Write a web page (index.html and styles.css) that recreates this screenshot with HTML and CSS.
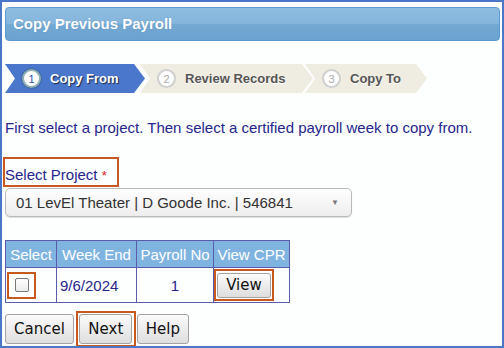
FILE: index.html
```html
<!DOCTYPE html>
<html lang="en">
<head>
  <meta charset="UTF-8" />
  <title>Copy Previous Payroll</title>
  <link rel="stylesheet" href="styles.css">
</head>
<body>
  <div class="frame">
    <div class="panel-head">Copy Previous Payroll</div>

    <div class="steps">
      <div class="step step-first active"><span class="num">1</span>Copy From</div>
      <div class="step step-mid"><span class="num">2</span>Review Records</div>
      <div class="step step-last"><span class="num">3</span>Copy To</div>
    </div>

    <p class="intro">First select a project. Then select a certified payroll week to copy from.</p>

    <div class="hl label-box">Select Project <span class="req">*</span></div>

    <div class="select">
      <span>01 LevEl Theater | D Goode Inc. | 546841</span>
      <span class="caret">&#9660;</span>
    </div>

    <table class="weeks">
      <tr>
        <th class="c-sel">Select</th>
        <th class="c-week">Week End</th>
        <th class="c-no">Payroll No</th>
        <th class="c-view">View CPR</th>
      </tr>
      <tr>
        <td class="c-sel"><span class="hl check-box"><span class="check"></span></span></td>
        <td class="c-week date">9/6/2024</td>
        <td class="c-no num-cell">1</td>
        <td class="c-view"><span class="hl btn-box"><button class="btn btn-view">View</button></span></td>
      </tr>
    </table>

    <div class="actions">
      <button class="btn">Cancel</button>
      <span class="hl next-box"><button class="btn">Next</button></span>
      <button class="btn btn-help">Help</button>
    </div>
  </div>
</body>
</html>
```

FILE: styles.css
```css
body {
  margin: 0;
  font-family: "Liberation Sans", Arial, sans-serif;
  background: #fff;
}

.frame {
  width: 504px;
  height: 348px;
  box-sizing: border-box;
  border: 2px solid #4a78c9;
  padding: 5px 2px 0 3px;
  background: #fdfefe;
  overflow: hidden;
}

.panel-head {
  height: 32px;
  line-height: 32px;
  border: 1px solid #5d98d2;
  border-radius: 4px;
  padding-left: 7px;
  background: linear-gradient(#8fbde1, #84b5dc 48%, #73a8d2 52%, #6ba2cf);
  color: #fff;
  font-size: 15px;
  font-weight: bold;
  text-shadow: 0 0 1px rgba(40, 80, 130, 0.4);
}

/* wizard steps */
.steps {
  display: flex;
  height: 29px;
  margin: 23px 0 0 0;
}

.step {
  display: flex;
  align-items: center;
  gap: 9px;
  box-sizing: border-box;
  padding-left: 17px;
  background: #efece1;
  color: #555;
  font-size: 13px;
  font-weight: bold;
  text-shadow: 0 1px 0 #fff;
  clip-path: polygon(0 0, calc(100% - 11px) 0, 100% 50%, calc(100% - 11px) 100%, 0 100%, 10px 50%);
}

.step-first { width: 140px; }
.step-mid { width: 173px; margin-left: -5px; }
.step-last { width: 122px; margin-left: -8px; }

.step.active {
  background: #4a77cc;
  color: #fff;
  text-shadow: 1px 1px 1px #1d2b4a;
}

.num {
  display: inline-flex;
  align-items: center;
  justify-content: center;
  width: 15px;
  height: 15px;
  border: 2px solid #cfcfcf;
  border-radius: 50%;
  background: #fff;
  color: #aaa;
  font-size: 11px;
  font-weight: normal;
  text-shadow: none;
}

.active .num {
  border-color: #8fb0b4;
  color: #2a55b0;
  box-shadow: 0 0 2px #2c4560;
}

.intro {
  margin: 26px 0 21px 0;
  font-size: 15px;
  line-height: 17px;
  color: #26268c;
}

/* orange highlight boxes */
.hl {
  border: 2px solid #c8591e;
  box-sizing: border-box;
}

.label-box {
  display: inline-block;
  margin-left: -2px;
  padding: 7px 10px 2px 0;
  height: 30px;
  font-size: 15px;
  line-height: 17px;
  color: #26268c;
}

.req { color: #e02020; font-size: 13px; }

.select {
  display: flex;
  align-items: center;
  justify-content: space-between;
  width: 347px;
  height: 29px;
  box-sizing: border-box;
  margin: 1px 0 0 0;
  padding: 0 12px 0 10px;
  border: 1px solid #b9b9b9;
  border-radius: 5px;
  background: linear-gradient(#ffffff, #ededed);
  box-shadow: 0 1px 1px rgba(0, 0, 0, 0.12);
  color: #333;
  font-size: 15px;
}

.caret { color: #777; font-size: 8px; }

/* weeks table */
.weeks {
  margin: 23px 0 0 0;
  border-collapse: collapse;
  table-layout: fixed;
  border: 1px solid #5c5cae;
  font-size: 15px;
}

.weeks th, .weeks td {
  border: 1px solid #5c5cae;
  padding: 0;
}

.weeks th {
  height: 26px;
  background: #80b4e0;
  color: #fff;
  font-weight: normal;
  text-align: center;
}

.weeks td { height: 34px; }

.c-sel { width: 50px; }
.c-week { width: 76px; }
.c-no { width: 76px; }
.c-view { width: 75px; }

.date { color: #26268c; padding-left: 3px !important; }
.num-cell { text-align: center; color: #26268c; }

.check-box {
  display: flex;
  align-items: center;
  justify-content: center;
  width: 29px;
  height: 27px;
  margin-left: 1px;
}

.check {
  display: block;
  width: 12px;
  height: 12px;
  border: 1px solid #7a7a7a;
  border-radius: 2px;
  background: linear-gradient(#fff, #ececec);
}

.btn-box {
  display: inline-flex;
  align-items: center;
  justify-content: center;
  width: 60px;
  height: 32px;
  vertical-align: middle;
}

/* buttons */
.btn {
  height: 30px;
  padding: 0 8px;
  border: 1px solid #a3a3a3;
  border-radius: 3px;
  background: linear-gradient(#fbfbfb, #dedede);
  color: #111;
  font-family: "DejaVu Sans", Verdana, sans-serif;
  font-size: 15px;
}

.btn-view { height: 25px; }

.actions {
  display: flex;
  align-items: center;
  margin: 8px 0 0 0;
}

.next-box {
  display: inline-flex;
  align-items: center;
  justify-content: center;
  width: 60px;
  height: 36px;
  margin-left: 2px;
}

.btn-help { margin-left: 1px; }
```
